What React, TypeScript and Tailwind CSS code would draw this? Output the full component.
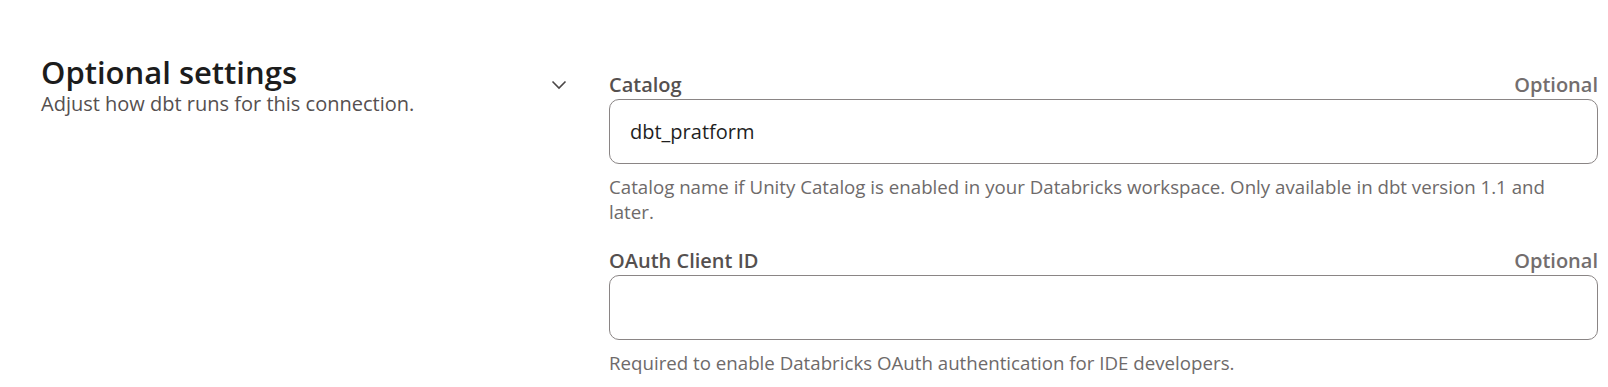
import React from "react";

const font = { fontFamily: '"Open Sans", "Noto Sans", sans-serif' };

function Field({ label, value, help }: { label: string; value?: string; help: string }) {
  return (
    <div className="flex flex-col">
      <div className="flex items-end justify-between h-[29px] leading-[24px]">
        <span className="text-[20px] font-semibold text-[#55504f]">{label}</span>
        <span className="text-[20px] font-semibold text-[#736e6e]">Optional</span>
      </div>
      <div className="mt-[2px] h-[65px] rounded-[10px] border border-[#8a8585] bg-white flex items-center px-[20px]">
        <span className="text-[20px] text-[#1f1f1f]">{value}</span>
      </div>
      <p className="mt-[10px] max-w-[960px] text-[18.7px] leading-[25px] text-[#6e6a6a]">{help}</p>
    </div>
  );
}

export default function App() {
  return (
    <div className="w-[1608px] h-[387px] bg-white flex pl-[41px] pr-[10px] pt-[52px]" style={font}>
      <div className="w-[526px] flex justify-between">
        <div className="flex flex-col pt-[2px]">
          <h2 className="text-[31px] font-semibold leading-[36px] text-[#1c1c1c]">Optional settings</h2>
          <p className="mt-[2px] text-[20px] leading-[24px] text-[#555050]">Adjust how dbt runs for this connection.</p>
        </div>
        <div className="pt-[28px]">
          <svg width="16" height="10" viewBox="0 0 16 10" fill="none">
            <path d="M1.5 1.5 L8 8 L14.5 1.5" stroke="#4a4646" strokeWidth="1.6" />
          </svg>
        </div>
      </div>
      <div className="ml-[42px] flex-1 flex flex-col gap-[20px] pt-[16px]">
        <Field
          label="Catalog"
          value="dbt_pratform"
          help="Catalog name if Unity Catalog is enabled in your Databricks workspace. Only available in dbt version 1.1 and later."
        />
        <Field label="OAuth Client ID" help="Required to enable Databricks OAuth authentication for IDE developers." />
      </div>
    </div>
  );
}
